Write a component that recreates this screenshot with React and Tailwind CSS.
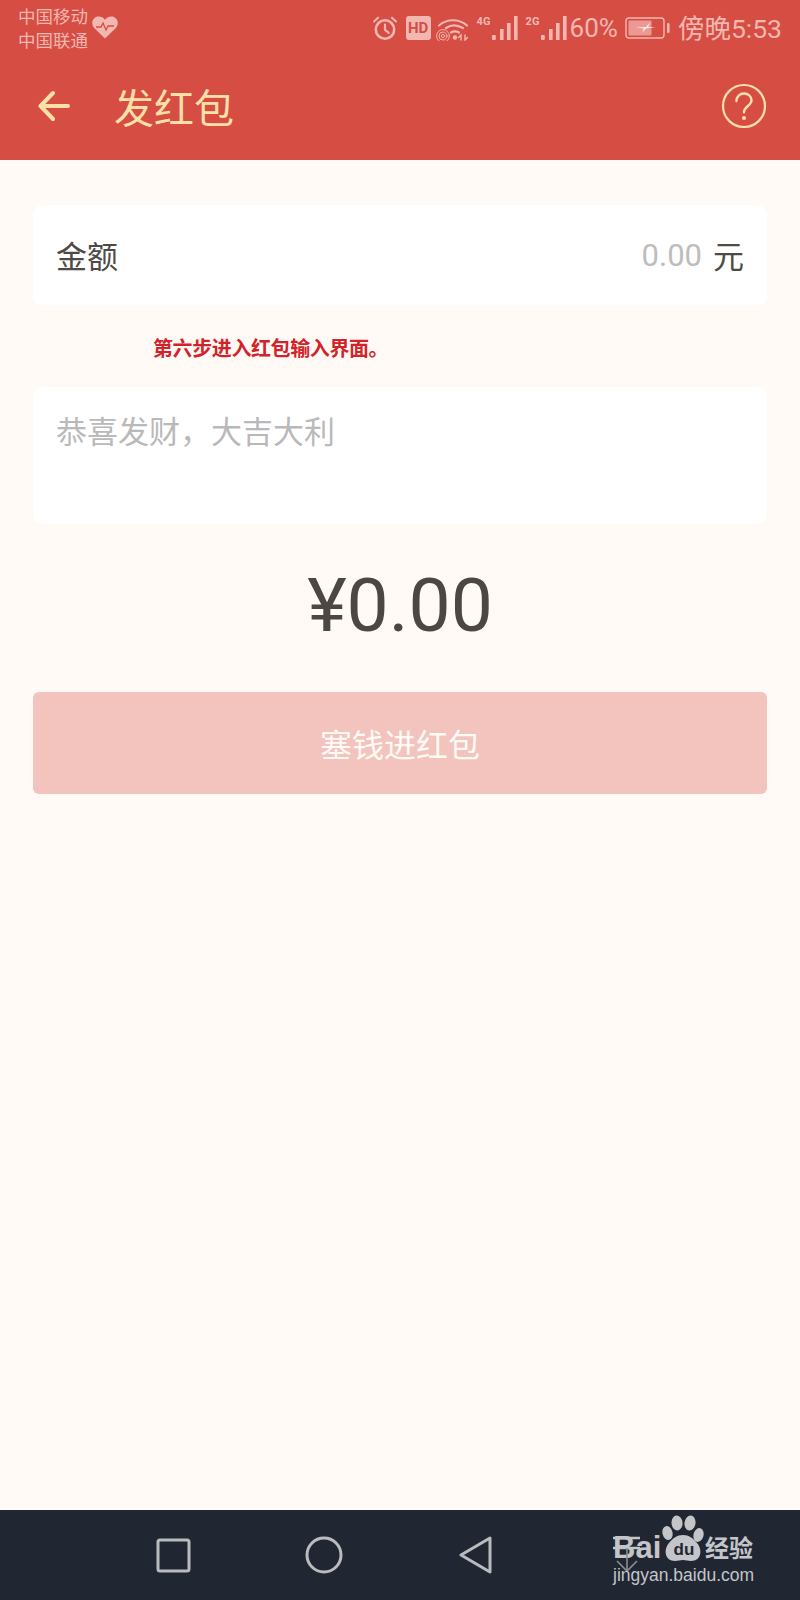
const cjk = "font-['Noto_Sans_CJK_SC','Noto_Sans',sans-serif]";

function Alarm() {
  return (
    <svg width="26" height="26" viewBox="0 0 26 26" fill="none" stroke="#f3b7b1" strokeWidth="2.6" strokeLinecap="round">
      <circle cx="13" cy="14.5" r="9.2" />
      <path d="M13 9.500v5.200l3.600 3.200" strokeWidth="2.200" />
      <path d="M2 6.500 6 2.800M24 6.500 20 2.800" strokeWidth="2" />
    </svg>
  );
}

function Wifi() {
  return (
    <svg width="34" height="25" viewBox="0 0 34 25" fill="none" stroke="#f3b7b1" strokeLinecap="round">
      <path d="M3 9.500C11 2.500 23 2.500 31 9.500" strokeWidth="2.200" />
      <path d="M10 12c5-3.500 11-3.500 17 0" strokeWidth="2.200" />
      <path d="M15 16.500c2.500-1.500 5-1.500 8 0" strokeWidth="2.200" />
      <circle cx="7" cy="20" r="1.600" strokeWidth="1" />
      <circle cx="7" cy="20" r="4" strokeWidth="1" />
      <circle cx="7" cy="20" r="6.400" strokeWidth="1" />
      <circle cx="19" cy="21.500" r="2.200" fill="#f3b7b1" stroke="none" />
      <path d="M25 24v-5l-2.500 2.500M29 19v5l2.500-2.500" strokeWidth="1.400" />
    </svg>
  );
}

function Signal({ label }) {
  return (
    <div className="flex items-start w-[41px] h-[25px]">
      <span className="text-[11px] leading-[12px] font-bold w-[15px] font-['Roboto',sans-serif]">{label}</span>
      <svg width="26" height="25" viewBox="0 0 26 25" fill="#f3b7b1">
        <rect x="0" y="19" width="3.800" height="5" rx="1" />
        <rect x="8" y="13" width="3.600" height="11" />
        <rect x="15" y="7" width="3.600" height="17" />
        <rect x="22" y="0" width="3.600" height="24" />
      </svg>
    </div>
  );
}

function Battery() {
  return (
    <svg width="45" height="22" viewBox="0 0 45 22" fill="none">
      <rect x="1" y="1" width="38" height="20" rx="3" stroke="#f3b7b1" strokeWidth="1.400" />
      <rect x="3.500" y="3.500" width="23" height="15" rx="1" fill="#eb9a93" />
      <path d="M11 10.500 21 10l4-4.500-2 4.500h8l-10 1.500-4 4.500 2-4.500z" fill="#fdeeeb" />
      <rect x="42" y="6" width="2.600" height="10" rx="1.200" fill="#f3b7b1" />
    </svg>
  );
}

function StatusBar() {
  return (
    <div className={`flex items-center justify-between h-[55px] pl-[18px] pr-[18px] pt-[1px] text-[#f3b7b1] ${cjk}`}>
      <div className="flex items-center gap-[4px]">
        <div className="text-[17.5px] leading-[24px]">
          <div>中国移动</div>
          <div>中国联通</div>
        </div>
        <svg width="26" height="23" viewBox="0 0 26 23" className="mb-[2px]">
          <path d="M13 22.500 2.400 12.200C-.6 9-.4 4.500 2.600 2c3-2.400 7.500-1.800 10.400 1.800C15.900.2 20.400-.4 23.400 2c3 2.500 3.200 7 .2 10.200z" fill="#f3b7b1" />
          <path d="M4 11h5l2-4 3 7 2-4h6" fill="none" stroke="#d64e43" strokeWidth="1.300" />
        </svg>
      </div>
      <div className="flex items-center">
        <Alarm />
        <div className="w-[25px] h-[24px] ml-[8px] rounded-[3px] bg-[#f3b7b1] text-[#d64e43] text-[15px] leading-[24px] font-bold text-center font-['Roboto',sans-serif]">HD</div>
        <div className="ml-[5px]"><Wifi /></div>
        <div className="ml-[7px]"><Signal label="4G" /></div>
        <div className="ml-[8px]"><Signal label="2G" /></div>
        <span className="ml-[3px] text-[26px] leading-[30px] font-['Roboto',sans-serif]">60%</span>
        <div className="ml-[7px]"><Battery /></div>
        <span className="ml-[8px] text-[26.5px] leading-[30px] whitespace-nowrap">傍晚<span className="font-['Roboto',sans-serif]">5:53</span></span>
      </div>
    </div>
  );
}

function TitleBar() {
  return (
    <div className={`flex items-center h-[105px] pl-[38px] pr-[33px] pb-[3px] text-[#fde0a8] ${cjk}`}>
      <svg width="32" height="32" viewBox="0 0 32 32" fill="none" stroke="#fde0a8" strokeWidth="4" strokeLinecap="round" strokeLinejoin="round">
        <path d="M30 16H3M15 3 2.500 16 15 29" />
      </svg>
      <h1 className="ml-[44px] text-[40px] leading-[48px] font-normal">发红包</h1>
      <svg width="46" height="46" viewBox="0 0 46 46" fill="none" stroke="#fde0a8" className="ml-auto">
        <circle cx="23" cy="23" r="21" strokeWidth="2.200" />
        <path d="M15.500 18c0-4.500 3.300-7.500 7.500-7.500s7.500 2.800 7.500 6.800c0 5.700-7.500 5.700-7.500 12" strokeWidth="2.400" strokeLinecap="round" />
        <circle cx="23" cy="35" r="2" fill="#fde0a8" stroke="none" />
      </svg>
    </div>
  );
}

function Watermark() {
  return (
    <div className="absolute left-[613px] top-[1513px] w-[145px] h-[72px] text-[#c3c5c8]">
      <div className="absolute left-0 top-[20px] text-[31px] leading-[30px] font-bold font-['Liberation_Sans',sans-serif]">Bai</div>
      {/* stray arrow sitting over the B */}
      <svg width="30" height="40" viewBox="0 0 30 40" className="absolute left-0 top-[22px]" fill="none" stroke="#c3c5c8" strokeWidth="1.600">
        <path d="M0 3h27M0 13h27" strokeWidth="2.400" />
        <path d="M14 13v23M4 26l10 10 10-10" stroke="#8b8d91" />
      </svg>
      <svg width="44" height="48" viewBox="0 0 44 48" className="absolute left-[49px] top-[2px]" fill="#c3c5c8">
        <ellipse cx="5.500" cy="18" rx="5" ry="7" transform="rotate(-14 5.500 18)" />
        <ellipse cx="15" cy="8" rx="5.500" ry="7.500" transform="rotate(-6 15 8)" />
        <ellipse cx="28" cy="8" rx="5.500" ry="7.500" transform="rotate(8 28 8)" />
        <ellipse cx="36.500" cy="20" rx="5" ry="7" transform="rotate(16 36.500 20)" />
        <path d="M21 20c6 0 10 3 14 8 6 7 4 18-6 18-3 0-5-1-8-1s-5 1-8 1c-10 0-12-11-6-18 4-5 8-8 14-8z" />
      </svg>
      <div className="absolute left-[59px] top-[28px] w-[24px] text-center text-[17px] leading-[18px] font-bold text-[#212732] font-['Liberation_Sans',sans-serif]">du</div>
      <div className={`absolute left-[92px] top-[20px] text-[24px] leading-[28px] font-bold ${cjk}`}>经验</div>
      <div className="absolute left-0 top-[52px] text-[17.5px] leading-[20px] whitespace-nowrap font-['Liberation_Sans',sans-serif]">jingyan.baidu.com</div>
    </div>
  );
}

function NavBar() {
  return (
    <div className="relative flex items-center h-[90px] pl-[156px] bg-[#212732]">
      <svg width="35" height="35" viewBox="0 0 35 35" fill="none" stroke="#b9bbbd" strokeWidth="3">
        <rect x="2" y="2" width="31" height="31" rx="2" />
      </svg>
      <svg width="38" height="38" viewBox="0 0 38 38" fill="none" stroke="#b9bbbd" strokeWidth="3" className="ml-[114px]">
        <circle cx="19" cy="19" r="17" />
      </svg>
      <svg width="34" height="38" viewBox="0 0 34 38" fill="none" stroke="#b9bbbd" strokeWidth="3" strokeLinejoin="round" className="ml-[116px]">
        <path d="M31 2 2 19l29 17z" />
      </svg>
    </div>
  );
}

export default function App() {
  return (
    <div className={`relative flex flex-col w-[800px] h-[1600px] bg-[#fffaf5] overflow-hidden ${cjk}`}>
      <div className="bg-[#d64e43] h-[160px]">
        <StatusBar />
        <TitleBar />
      </div>

      <main className="flex flex-col flex-1 px-[33px] pt-[45px]">
        <div className="flex items-center justify-between h-[101px] px-[23px] rounded-[10px] bg-white text-[31px] text-[#4e4a46]">
          <span>金额</span>
          <div className="flex items-center">
            <span className="pt-[2px] text-[#bdbdbd] font-['Roboto',sans-serif]">0.00</span>
            <span className="ml-[11px]">元</span>
          </div>
        </div>

        <p className="h-[81px] pl-[120px] text-[20px] leading-[84px] font-bold text-[#d2232a] tracking-[-0.4px]">第六步进入红包输入界面。</p>

        <div className="h-[137px] px-[23px] pt-[20px] rounded-[10px] bg-white text-[31px] leading-[46px] text-[#b9b9b9]">恭喜发财，大吉大利</div>

        <div className="mt-[31px] h-[100px] text-center text-[75px] leading-[100px] text-[#4c4743] font-['Roboto',sans-serif]">¥0.00</div>

        <button className="mt-[37px] h-[102px] rounded-[6px] bg-[#f2c4bd] text-[32px] text-[#fffaf5]">塞钱进红包</button>
      </main>

      <NavBar />
      <Watermark />
    </div>
  );
}
